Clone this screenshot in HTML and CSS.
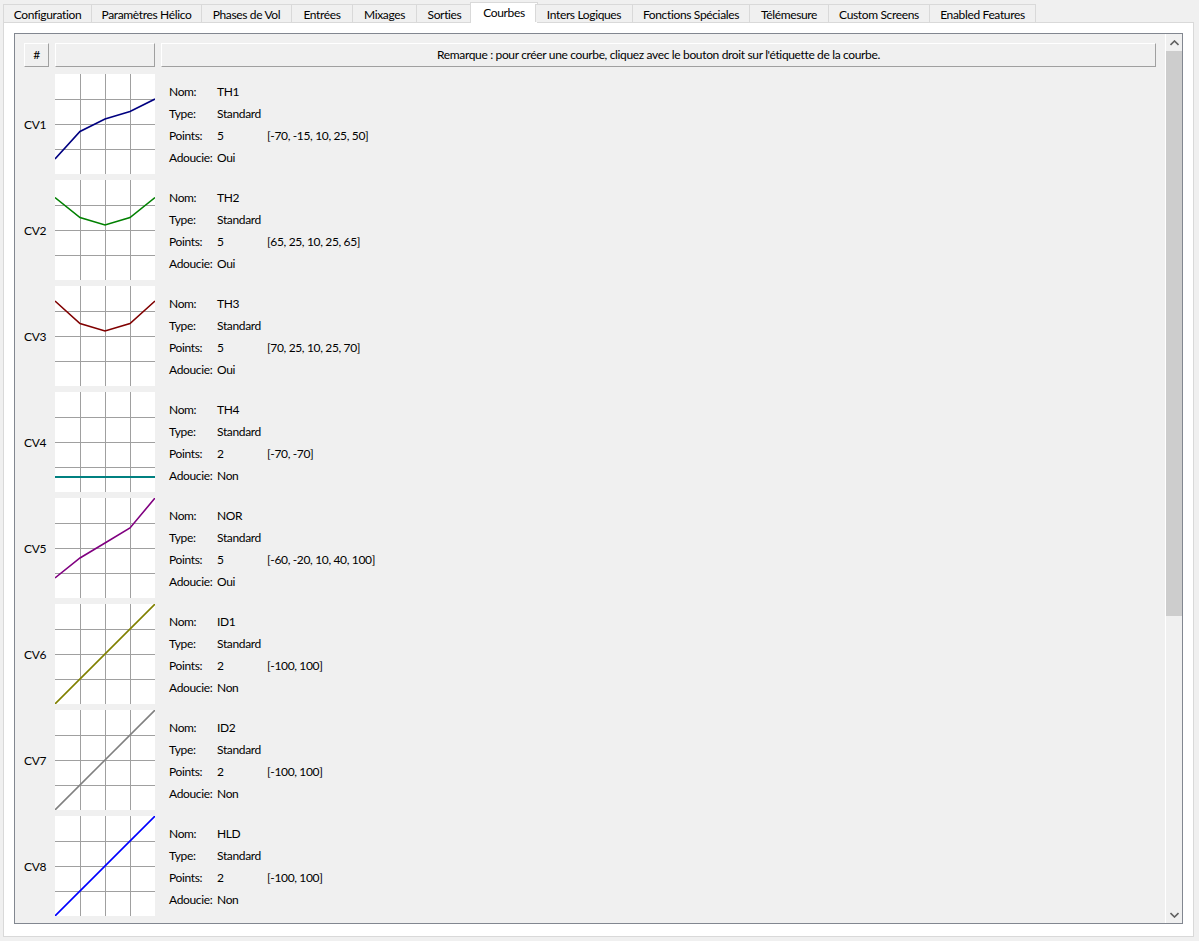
FILE: index.html
```html
<!DOCTYPE html>
<html lang="fr">
<head>
    <meta charset="UTF-8">
    <title>Courbes</title>
    <link rel="stylesheet" href="styles.css">
</head>
<body>
    <div class="tabs">
        <div class="tab w1">Configuration</div>
        <div class="tab w2">Paramètres Hélico</div>
        <div class="tab w3">Phases de Vol</div>
        <div class="tab w4">Entrées</div>
        <div class="tab w5">Mixages</div>
        <div class="tab w6">Sorties</div>
        <div class="tab active w7">Courbes</div>
        <div class="tab w8">Inters Logiques</div>
        <div class="tab w9">Fonctions Spéciales</div>
        <div class="tab w10">Télémesure</div>
        <div class="tab w11">Custom Screens</div>
        <div class="tab w12">Enabled Features</div>
    </div>

    <div class="panel">
        <div class="frame">
            <div class="content">
                <div class="header">
                    <div class="hbtn hash">#</div>
                    <div class="hbtn blank"></div>
                    <div class="hbtn note">Remarque : pour créer une courbe, cliquez avec le bouton droit sur l'étiquette de la courbe.</div>
                </div>

                <div class="curve">
                    <div class="cv-label">CV1</div>
                    <div class="plot"><svg viewBox="0 0 100 100"><polyline class="c1" points="0,85 25,57.5 50,45 75,37.5 100,25"/></svg></div>
                    <div class="info">
                        <div class="line"><span class="key">Nom:</span><span class="val">TH1</span></div>
                        <div class="line"><span class="key">Type:</span><span class="val">Standard</span></div>
                        <div class="line"><span class="key">Points:</span><span class="val">5</span><span>[-70, -15, 10, 25, 50]</span></div>
                        <div class="line"><span class="key">Adoucie:</span><span class="val">Oui</span></div>
                    </div>
                </div>

                <div class="curve">
                    <div class="cv-label">CV2</div>
                    <div class="plot"><svg viewBox="0 0 100 100"><polyline class="c2" points="0,17.5 25,37.5 50,45 75,37.5 100,17.5"/></svg></div>
                    <div class="info">
                        <div class="line"><span class="key">Nom:</span><span class="val">TH2</span></div>
                        <div class="line"><span class="key">Type:</span><span class="val">Standard</span></div>
                        <div class="line"><span class="key">Points:</span><span class="val">5</span><span>[65, 25, 10, 25, 65]</span></div>
                        <div class="line"><span class="key">Adoucie:</span><span class="val">Oui</span></div>
                    </div>
                </div>

                <div class="curve">
                    <div class="cv-label">CV3</div>
                    <div class="plot"><svg viewBox="0 0 100 100"><polyline class="c3" points="0,15 25,37.5 50,45 75,37.5 100,15"/></svg></div>
                    <div class="info">
                        <div class="line"><span class="key">Nom:</span><span class="val">TH3</span></div>
                        <div class="line"><span class="key">Type:</span><span class="val">Standard</span></div>
                        <div class="line"><span class="key">Points:</span><span class="val">5</span><span>[70, 25, 10, 25, 70]</span></div>
                        <div class="line"><span class="key">Adoucie:</span><span class="val">Oui</span></div>
                    </div>
                </div>

                <div class="curve">
                    <div class="cv-label">CV4</div>
                    <div class="plot"><svg viewBox="0 0 100 100"><polyline class="c4 thick" points="0,85 100,85"/></svg></div>
                    <div class="info">
                        <div class="line"><span class="key">Nom:</span><span class="val">TH4</span></div>
                        <div class="line"><span class="key">Type:</span><span class="val">Standard</span></div>
                        <div class="line"><span class="key">Points:</span><span class="val">2</span><span>[-70, -70]</span></div>
                        <div class="line"><span class="key">Adoucie:</span><span class="val">Non</span></div>
                    </div>
                </div>

                <div class="curve">
                    <div class="cv-label">CV5</div>
                    <div class="plot"><svg viewBox="0 0 100 100"><polyline class="c5" points="0,80 25,60 50,45 75,30 100,0"/></svg></div>
                    <div class="info">
                        <div class="line"><span class="key">Nom:</span><span class="val">NOR</span></div>
                        <div class="line"><span class="key">Type:</span><span class="val">Standard</span></div>
                        <div class="line"><span class="key">Points:</span><span class="val">5</span><span>[-60, -20, 10, 40, 100]</span></div>
                        <div class="line"><span class="key">Adoucie:</span><span class="val">Oui</span></div>
                    </div>
                </div>

                <div class="curve">
                    <div class="cv-label">CV6</div>
                    <div class="plot"><svg viewBox="0 0 100 100"><polyline class="c6" points="0,100 100,0"/></svg></div>
                    <div class="info">
                        <div class="line"><span class="key">Nom:</span><span class="val">ID1</span></div>
                        <div class="line"><span class="key">Type:</span><span class="val">Standard</span></div>
                        <div class="line"><span class="key">Points:</span><span class="val">2</span><span>[-100, 100]</span></div>
                        <div class="line"><span class="key">Adoucie:</span><span class="val">Non</span></div>
                    </div>
                </div>

                <div class="curve">
                    <div class="cv-label">CV7</div>
                    <div class="plot"><svg viewBox="0 0 100 100"><polyline class="c7" points="0,100 100,0"/></svg></div>
                    <div class="info">
                        <div class="line"><span class="key">Nom:</span><span class="val">ID2</span></div>
                        <div class="line"><span class="key">Type:</span><span class="val">Standard</span></div>
                        <div class="line"><span class="key">Points:</span><span class="val">2</span><span>[-100, 100]</span></div>
                        <div class="line"><span class="key">Adoucie:</span><span class="val">Non</span></div>
                    </div>
                </div>

                <div class="curve">
                    <div class="cv-label">CV8</div>
                    <div class="plot"><svg viewBox="0 0 100 100"><polyline class="c8" points="0,100 100,0"/></svg></div>
                    <div class="info">
                        <div class="line"><span class="key">Nom:</span><span class="val">HLD</span></div>
                        <div class="line"><span class="key">Type:</span><span class="val">Standard</span></div>
                        <div class="line"><span class="key">Points:</span><span class="val">2</span><span>[-100, 100]</span></div>
                        <div class="line"><span class="key">Adoucie:</span><span class="val">Non</span></div>
                    </div>
                </div>
            </div>

            <!-- vertical scrollbar -->
            <div class="scrollbar">
                <div class="arrow"><svg width="9" height="6" viewBox="0 0 9 6"><polyline points="0.5,5 4.5,1 8.5,5"/></svg></div>
                <div class="track">
                    <div class="thumb"></div>
                </div>
                <div class="arrow"><svg width="9" height="6" viewBox="0 0 9 6"><polyline points="0.5,1 4.5,5 8.5,1"/></svg></div>
            </div>
        </div>
    </div>
</body>
</html>
```

FILE: styles.css
```css
body {
    margin: 0;
    padding-top: 2px;
    background: #f0f0f0;
    font-family: Lato, "Noto Sans", sans-serif;
    font-size: 12px;
    letter-spacing: -0.35px;
    color: #000;
    height: 939px;
    overflow: hidden;
}
.tabs {
    display: flex;
    align-items: flex-end;
    height: 20px;
    padding-left: 3px;
    position: relative;
    z-index: 1;
}
.tab {
    box-sizing: border-box;
    height: 18px;
    padding-top: 2px;
    line-height: 16px;
    border: 1px solid #d9d9d9;
    border-bottom: none;
    margin-right: -1px;
    background: #f0f0f0;
    text-align: center;
    white-space: nowrap;
}
.tab.active {
    height: 21px;
    padding-top: 2px;
    background: #fff;
    margin: 0 -3px -1px -2px;
}
.w1 { width: 89px; }
.w2 { width: 111px; }
.w3 { width: 91px; }
.w4 { width: 62px; }
.w5 { width: 65px; }
.w6 { width: 57px; }
.w7 { width: 68px; }
.w8 { width: 98px; }
.w9 { width: 118px; }
.w10 { width: 80px; }
.w11 { width: 102px; }
.w12 { width: 107px; }

.panel {
    box-sizing: border-box;
    margin-left: 3px;
    width: 1191px;
    height: 915px;
    background: #fff;
    border: 1px solid #d9d9d9;
    padding: 10px 10px 12px 10px;
}
.frame {
    box-sizing: border-box;
    height: 891px;
    width: 1169px;
    border: 1px solid #828790;
    background: #f0f0f0;
    display: flex;
}
.content {
    flex: 1;
    overflow: hidden;
    padding: 9px 0 0 9px;
    display: flex;
    flex-direction: column;
    gap: 6px;
}
.header {
    display: flex;
    gap: 6px;
    margin-bottom: 1px;
}
.hbtn {
    box-sizing: border-box;
    height: 24px;
    background: #f0f0f0;
    border: 1px solid #a0a0a0;
    border-top-color: #fff;
    border-left-color: #fff;
    text-align: center;
    line-height: 22px;
}
.hash { width: 25px; }
.blank { width: 100px; }
.note { width: 995px; }

.curve {
    display: flex;
    gap: 6px;
    height: 100px;
    flex-shrink: 0;
}
.cv-label {
    width: 25px;
    display: flex;
    align-items: center;
}
.plot {
    width: 100px;
    height: 100px;
    background:
        linear-gradient(#a0a0a0, #a0a0a0) 25px 0 / 1px 100% no-repeat,
        linear-gradient(#a0a0a0, #a0a0a0) 50px 0 / 1px 100% no-repeat,
        linear-gradient(#a0a0a0, #a0a0a0) 75px 0 / 1px 100% no-repeat,
        linear-gradient(#a0a0a0, #a0a0a0) 0 25px / 100% 1px no-repeat,
        linear-gradient(#a0a0a0, #a0a0a0) 0 50px / 100% 1px no-repeat,
        linear-gradient(#a0a0a0, #a0a0a0) 0 75px / 100% 1px no-repeat,
        #fff;
}
.plot svg {
    display: block;
    width: 100px;
    height: 100px;
    overflow: hidden;
}
.plot polyline {
    fill: none;
    stroke-width: 1.6;
}
.plot polyline.thick { stroke-width: 2; }
.c1 { stroke: #000080; }
.c2 { stroke: #008000; }
.c3 { stroke: #800000; }
.c4 { stroke: #008080; }
.c5 { stroke: #800080; }
.c6 { stroke: #808000; }
.c7 { stroke: #808080; }
.c8 { stroke: #0000ff; }

.info {
    padding: 7px 0 0 8px;
}
.line {
    display: flex;
    height: 22px;
    line-height: 22px;
}
.key { width: 48px; }
.val { width: 50px; }

.scrollbar {
    width: 16px;
    border-left: 1px solid #fff;
    display: flex;
    flex-direction: column;
    background: #f0f0f0;
}
.arrow {
    height: 17px;
    display: flex;
    align-items: center;
    justify-content: center;
}
.arrow polyline {
    fill: none;
    stroke: #606060;
    stroke-width: 1.6;
}
.track {
    flex: 1;
}
.thumb {
    height: 565px;
    background: #cdcdcd;
}
```
